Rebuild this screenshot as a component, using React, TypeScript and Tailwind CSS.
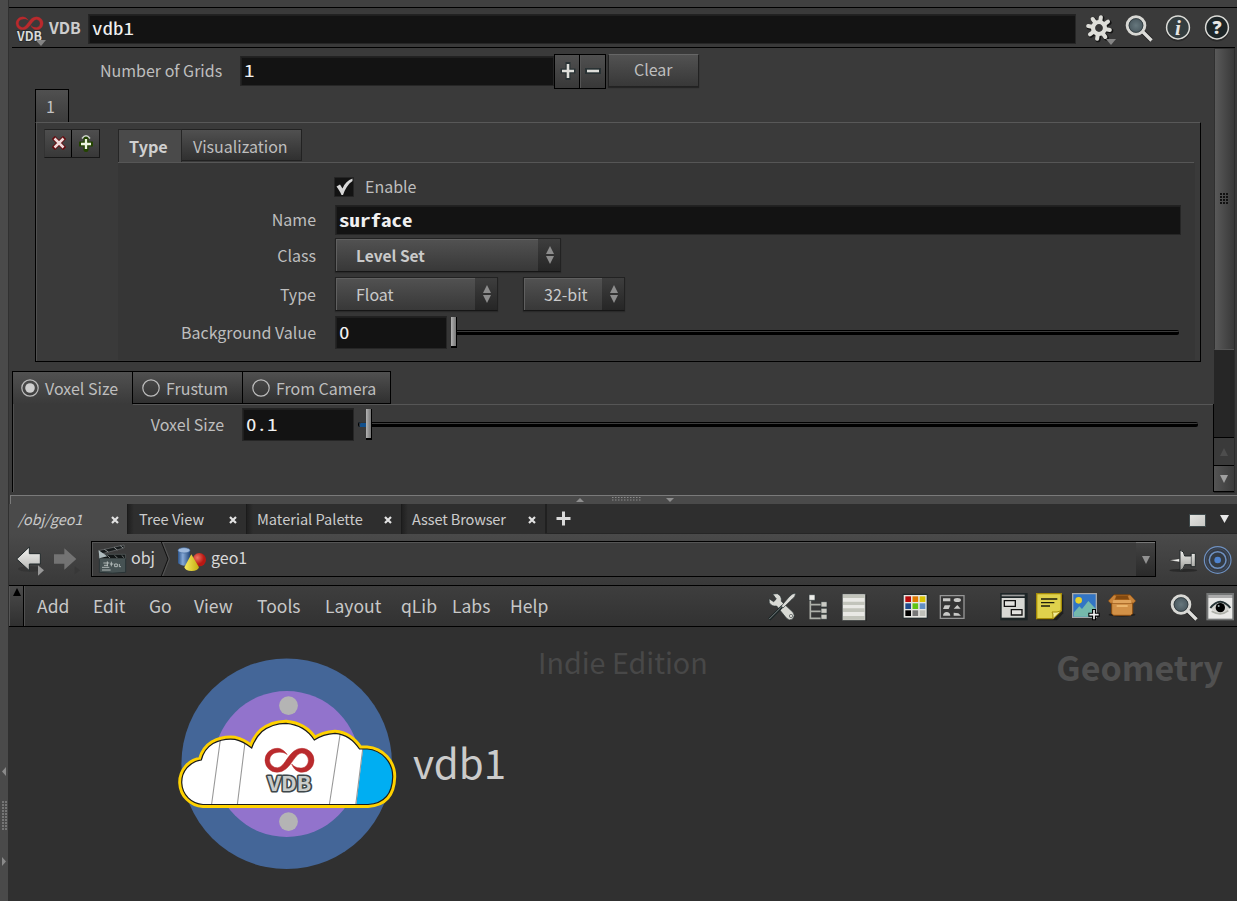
import React from "react";

const MONO = "font-['Noto_Sans_Mono_CJK_SC','DejaVu_Sans_Mono',monospace]";

function Label({ children, className = "" }: { children: React.ReactNode; className?: string }) {
  return <span className={`block shrink-0 whitespace-nowrap leading-6 ${className}`}>{children}</span>;
}

function Field({ value, className = "", textClass = "" }: { value: string; className?: string; textClass?: string }) {
  return (
    <div className={`flex shrink-0 items-center border border-[#262626] border-t-[#222] bg-[#131313] pl-[3px] shadow-[inset_1px_1px_0_#1f1f1f] ${className}`}>
      <span className={`${MONO} mb-px inline-block origin-left scale-x-[1.235] whitespace-pre text-[17px] leading-6 text-[#f0f0f0] ${textClass}`}>{value}</span>
    </div>
  );
}

function Select({ value, className = "", textClass = "" }: { value: string; className?: string; textClass?: string }) {
  return (
    <div className={`flex h-[34px] shrink-0 border border-[#222] border-b-[#161616] bg-linear-to-b from-[#525252] to-[#383838] shadow-[0_1px_1px_#2a2a2a] ${className}`}>
      <div className="flex flex-1 items-center border-l border-t border-[#606060] pb-[2px] pl-[19px]">
        <Label className={`text-[#cacaca] ${textClass}`}>{value}</Label>
      </div>
      <div className="flex w-[22px] items-center justify-center bg-linear-to-b from-[#3e3e3e] to-[#262626] pl-[2px]">
        <svg width="10" height="18" viewBox="0 0 10 18" className="mb-px">
          <path d="M5 0 9 8H1zM5 18 9 10H1z" fill="#8d8d8d" />
        </svg>
      </div>
    </div>
  );
}

function Handle() {
  return <div className="h-[31px] w-[6px] shrink-0 border-b-2 border-r border-black bg-linear-to-r from-[#b4b4b4] via-[#949494] to-[#777]" />;
}

function Track({ className = "" }: { className?: string }) {
  return <div className={`h-[5px] shrink-0 rounded-r-xs border-t border-black bg-[linear-gradient(#3c3c3c_0_1px,#000_1px)] ${className}`} />;
}

function Radio({ on }: { on?: boolean }) {
  return (
    <svg width="18" height="18" viewBox="0 0 18 18" className="shrink-0">
      <circle cx="9" cy="9" r="8.2" fill="none" stroke="#bdbdbd" strokeWidth="1.2" />
      {on && <circle cx="9" cy="9" r="4.8" fill="#cfcfcf" />}
    </svg>
  );
}

function Loop() {
  return (
    <path
      fill="#b92a2d"
      stroke="#b92a2d"
      strokeWidth=".5"
      strokeLinejoin="round"
      d="M22.500 6.500C19 2 16 .3 12.300 .3A12 12 0 0 0 12.300 24.300C26 24.300 29 5 37.300 5A7.600 7.600 0 0 1 37.300 20C33 20 30 19.500 27 16C29 21.500 33 24.300 37.300 24.300A12 12 0 0 0 37.300 .3C24 .3 21 19.300 12.800 19.800A7.600 7.600 0 0 1 12.300 4.500C16 3.800 19 4 22.500 6.500z"
    />
  );
}

function Magnifier() {
  return (
    <svg width="28" height="28" viewBox="0 0 28 28" className="shrink-0">
      <defs>
        <radialGradient id="lens"><stop stopColor="#66777d" /><stop offset="1" stopColor="#45535a" /></radialGradient>
      </defs>
      <path d="M17 17 26 26" stroke="#1d1d1d" strokeWidth="5" />
      <path d="M17 17 26.500 26.500" stroke="#dededb" strokeWidth="3.300" />
      <circle cx="11" cy="11.500" r="8.800" fill="url(#lens)" stroke="#d8d8d4" strokeWidth="3" />
      <circle cx="11" cy="11.500" r="6.900" fill="none" stroke="#2b3436" strokeWidth=".7" />
    </svg>
  );
}

function Gear() {
  return (
    <svg width="31" height="32" viewBox="0 0 31 32" className="shrink-0">
      <g transform="translate(14 15)">
        {[0, 45, 90, 135, 180, 225, 270, 315].map((a) => (
          <path key={a} d="M0-6V-11" transform={`translate(1 1) rotate(${a + 10})`} stroke="#151515" strokeWidth="5" strokeLinecap="round" />
        ))}
        {[0, 45, 90, 135, 180, 225, 270, 315].map((a) => (
          <path key={a} d="M0-6V-11" transform={`rotate(${a + 10})`} stroke="#deded9" strokeWidth="4" strokeLinecap="round" />
        ))}
        <circle r="6" fill="#363636" stroke="#deded9" strokeWidth="4.200" />
      </g>
      <path d="M21 26H31L26 32z" fill="#858585" />
    </svg>
  );
}

function RoundIcon({ glyph, serif }: { glyph: string; serif?: boolean }) {
  return (
    <svg width="26" height="28" viewBox="0 0 26 28" className="shrink-0">
      <circle cx="13" cy="15.500" r="12" fill="#202020" opacity=".6" />
      <circle cx="13" cy="13.500" r="11.400" fill={serif ? "#343d3f" : "#1d2527"} stroke="#dcdcd8" strokeWidth="1.500" />
      <text
        x="13"
        y={serif ? 20.5 : 20}
        textAnchor="middle"
        fill="#e6e6e4"
        className={serif ? "font-['Liberation_Serif',serif] text-[21px] font-bold italic" : "font-['Open_Sans',sans-serif] text-[18px] font-extrabold"}
      >
        {glyph}
      </text>
    </svg>
  );
}

function ParamHeader() {
  return (
    <div className="ml-[3px] mr-[2px] flex h-10 shrink-0 border-b border-black">
      <svg width="32" height="32" viewBox="0 0 32 32" className="ml-[3px] mt-2 shrink-0">
        <g transform="translate(.8 .7) scale(.555 .54)"><Loop /></g>
        <text x="2" y="25" textLength="25" lengthAdjust="spacingAndGlyphs" fill="#d8dad8" stroke="#252829" strokeWidth="1.500" paintOrder="stroke" className="text-[12.500px] font-bold">VDB</text>
        <path d="M20.500 24H31L26 30z" fill="#848484" />
      </svg>
      <Label className="ml-[2px] mt-[8px] w-[39px] text-[15.800px] font-bold text-[#cdcdcd]">VDB</Label>
      <Field value="vdb1" className="mt-[6px] h-[30px] w-[988px] pb-[2px]" />
      <div className="ml-[9px] mt-[5px]"><Gear /></div>
      <div className="ml-[9px] mt-[6px]"><Magnifier /></div>
      <div className="ml-[12px] mt-[6px]"><RoundIcon glyph="i" serif /></div>
      <div className="ml-[13px] mt-[6px]"><RoundIcon glyph="?" /></div>
    </div>
  );
}

function MultiparmPanel() {
  return (
    <div className="ml-[26px] w-[1166px]">
      <div className="flex h-[33px] w-[34px] items-center justify-center border border-b-0 border-black bg-linear-to-b from-[#505050] to-[#3c3c3c] pr-[3px] text-[#c4c4c4]">
        <Label>1</Label>
      </div>
      <div className="flex h-[240px] border border-black border-t-[#585858] shadow-[inset_1px_0_0_#505050]">
        <div className="ml-[8px] mt-[6px] flex h-[29px] w-[56px] shrink-0 border border-[#181818] border-l-[#333] border-t-[#222] bg-linear-to-b from-[#4e4e4e] to-[#383838]">
          <div className="flex w-[27px] items-center justify-center border-r border-black pb-px pl-[2px]">
            <svg width="14" height="14" viewBox="0 0 14 14">
              <path d="M3 3 11 11M11 3 3 11" stroke="#650c10" strokeWidth="4.500" strokeLinecap="square" />
              <path d="M2.500 2.500 11.500 11.500M11.500 2.500 2.500 11.500" stroke="#f0dada" strokeWidth="2.500" />
            </svg>
          </div>
          <div className="flex flex-1 items-center justify-center pb-[2px]">
            <svg width="14" height="18" viewBox="0 0 14 18">
              <path d="M7 4.500V15.500M1.500 10H12.500" stroke="#234400" strokeWidth="5" strokeLinecap="round" />
              <path d="M7 5V15M2 10H12" stroke="#eef4e2" strokeWidth="2.300" />
              <path d="M3 4.500Q7-1 11 4.500" stroke="#c9d0c7" strokeWidth="1.500" fill="none" />
            </svg>
          </div>
        </div>
        <div className="ml-[18px] mt-[6px] w-[1077px]">
          <div className="flex h-[33px]">
            <div className="w-[64px] border border-b-0 border-[#262626] bg-[#4a4a4a] pl-[10px] pt-[4px]">
              <Label className="text-[16.200px] font-bold text-[#d0d0d0]">Type</Label>
            </div>
            <div className="mb-px w-[120px] border border-l-0 border-[#222] bg-linear-to-b from-[#505050] to-[#303030] pl-[11px] pt-[4px]">
              <Label>Visualization</Label>
            </div>
          </div>
          <div className="mr-px h-px bg-[#565656]" />
          <div className="h-[197px] bg-[#363636]">
            <div className="flex h-[42px] items-start pl-[216px] pt-[14px]">
              <svg width="20" height="20" viewBox="0 0 20 20" className="shrink-0">
                <path d="M.5.5H19.500V19.500H.5z" fill="#131313" stroke="#242424" />
                <path d="M2.500 9.500 6 7.500 8.500 11.500C10.500 6.500 14 3 18.500 1.500V4C14 7 11 12 9 18H7.500C6 14.500 4.500 12 2.500 9.500z" fill="#d8d8d8" />
              </svg>
              <Label className="-mt-[3px] ml-[11px]">Enable</Label>
            </div>
            <div className="flex h-[33px]">
              <Label className="mt-[2px] w-[198px] text-right">Name</Label>
              <Field value="surface" className="ml-[19px] h-[30px] w-[846px]" textClass="font-bold" />
            </div>
            <div className="flex h-[39px]">
              <Label className="mt-[5px] w-[198px] text-right">Class</Label>
              <Select value="Level Set" className="ml-[19px] w-[226px]" textClass="text-[15.500px] font-bold" />
            </div>
            <div className="flex h-[39px]">
              <Label className="mt-[5px] w-[198px] text-right">Type</Label>
              <Select value="Float" className="ml-[19px] w-[163px]" />
              <Select value="32-bit" className="ml-[25px] w-[102px]" />
            </div>
            <div className="flex h-[33px]">
              <Label className="mt-[4px] w-[198px] text-right">Background Value</Label>
              <Field value="0" className="ml-[19px] h-[33px] w-[112px]" />
              <div className="ml-[4px] mt-px"><Handle /></div>
              <Track className="mt-[14px] w-[722px]" />
            </div>
          </div>
        </div>
      </div>
    </div>
  );
}

function SwitcherPanel() {
  return (
    <div className="ml-[3px] mt-[9px] w-[1202px]">
      <div className="flex h-[33px]">
        <div className="flex w-[120px] items-center gap-[6px] border-l border-t border-black bg-linear-to-b from-[#515151] to-[#3a3a3a] pl-[8px]">
          <Radio on /><Label>Voxel Size</Label>
        </div>
        <div className="flex w-[111px] items-center gap-[6px] border border-black bg-linear-to-b from-[#505050] to-[#303030] pl-[9px]">
          <Radio /><Label>Frustum</Label>
        </div>
        <div className="flex w-[148px] items-center gap-[6px] border border-l-0 border-black bg-linear-to-b from-[#505050] to-[#303030] pl-[9px]">
          <Radio /><Label>From Camera</Label>
        </div>
      </div>
      <div className="flex h-[88px] flex-col border-l border-r border-black shadow-[inset_1px_0_0_#505050]">
        <div className="ml-[120px] h-px shrink-0 bg-[#565656]" />
        <div className="mt-[3px] flex">
          <Label className="mt-[4px] w-[211px] text-right">Voxel Size</Label>
          <Field value="0.1" className="ml-[18px] h-[33px] w-[112px]" />
          <div className="ml-[4px] mt-[14px] h-[5px] w-[8px] rounded-l-xs border-l border-black bg-[#12508c] shadow-[inset_1px_1px_0_#333]" />
          <div className="mt-px"><Handle /></div>
          <Track className="mt-[14px] w-[826px]" />
        </div>
      </div>
    </div>
  );
}

function ParamScrollbar() {
  return (
    <div className="flex w-[21px] shrink-0 flex-col border-r border-[#2c2c2c] bg-[#262626]">
      <div className="flex h-[302px] items-center justify-center border-b border-l border-t border-[#303030] border-b-[#555] bg-linear-to-r from-[#5a5a5a] to-[#393939]">
        <svg width="9" height="12" viewBox="0 0 9 12">
          {[0, 3, 6].map((x) => [0, 3, 6, 9].map((y) => <path key={`${x}-${y}`} d={`M${x} ${y}h2v2h-2z`} fill="#111" />))}
        </svg>
      </div>
      <div className="flex-1" />
      <div className="flex h-[28px] items-center justify-center border-t border-black bg-[#3a3a3a]">
        <svg width="8" height="8"><path d="M4 0 8 8H0z" fill="#4d4d4d" /></svg>
      </div>
      <div className="mb-px flex h-[27px] items-center justify-center border-b border-t border-black bg-linear-to-r from-[#545454] to-[#3c3c3c]">
        <svg width="8" height="8"><path d="M0 0H8L4 8z" fill="#a0a0a0" /></svg>
      </div>
    </div>
  );
}

function CloseX() {
  return (
    <svg width="8" height="8" viewBox="0 0 8 8" className="mt-px shrink-0">
      <path d="M1 1 7 7M7 1 1 7" stroke="#e2e2e2" strokeWidth="2.200" />
    </svg>
  );
}

function PaneTab({ title, className }: { title: string; className: string }) {
  return (
    <div className={`flex h-[30px] shrink-0 items-center justify-between border-l border-[#1b1b1b] bg-linear-to-r from-[#202020] via-[#2e2e2e] via-[6px] to-[#2e2e2e] pr-[9px] ${className}`}>
      <Label className="text-[14.600px] text-[#cbcbcb]">{title}</Label>
      <CloseX />
    </div>
  );
}

function PaneTabs() {
  return (
    <div className="flex h-[30px] shrink-0 border-b border-[#262626] bg-[#2e2e2e]">
      <div className="-mb-px flex h-[30px] w-[118px] items-center justify-between bg-[#4a4a4a] pl-[9px] pr-[8px]">
        <Label className="text-[14.300px] italic text-[#cbcbcb]">/obj/geo1</Label>
        <CloseX />
      </div>
      <PaneTab title="Tree View" className="w-[119px] pl-[11px]" />
      <PaneTab title="Material Palette" className="w-[155px] pl-[10px]" />
      <PaneTab title="Asset Browser" className="w-[144px] pl-[10px] tracking-[-0.15px]" />
      <div className="flex flex-1 items-center border-l-2 border-[#202020] pl-[9px]">
        <svg width="15" height="15" viewBox="0 0 15 15"><path d="M7.500.5V14.500M.5 7.500H14.500" stroke="#dadada" strokeWidth="3" /></svg>
        <div className="flex-1" />
        <div className="mr-[14px] mt-[3px] h-[13px] w-[17px] border border-[#3f4a4c] bg-linear-to-br from-[#e2e2df] to-[#c8c8c5]" />
        <svg width="9" height="8" className="mr-[8px] mt-px"><path d="M0 0H9L4.500 8z" fill="#e8e8e8" /></svg>
      </div>
    </div>
  );
}

function PathBar() {
  return (
    <div className="flex h-[51px] shrink-0 bg-linear-to-b from-[#4a4a4a] to-[#393939]">
      <svg width="76" height="40" viewBox="27 139 228 120" className="mt-[2px] shrink-0">
        <defs>
          <linearGradient id="arrow" x2="0" y2="1"><stop stopColor="#f4f4f2" /><stop offset="1" stopColor="#b5b5b2" /></linearGradient>
        </defs>
        <ellipse cx="90" cy="238" rx="36" ry="8" fill="#2c2c2c" opacity=".5" />
        <path d="M50 208 88 172V192H121V223H88V243z" fill="url(#arrow)" stroke="#20282a" strokeWidth="3" />
        <path d="M229 208 193 176V194H162V222H193V240z" fill="#737373" />
        <path d="M114 227V258L132 242z" fill="#989898" />
        <path d="M224 230V254L240 242z" fill="#383838" />
      </svg>
      <div className="ml-[6px] mt-[7px] flex h-[36px] w-[1065px] shrink-0 border border-black bg-[#3b3b3b] shadow-[inset_1px_1px_0_#555]">
        <svg width="32" height="34" viewBox="276 156 96 102" className="shrink-0 overflow-visible">
          <path d="M298 204H377V247Q337 252 298 247z" fill="#465253" stroke="#293335" strokeWidth="3" />
          <path d="M296 182 372 165V174L299 193z" fill="#15191a" stroke="#84898a" strokeWidth="1.500" />
          <path d="M313 178 325 186M342 172 352 180M361 167 369 174" stroke="#8a8f8f" strokeWidth="3" />
          <path d="M298 193H376V206H298z" fill="#111616" stroke="#687273" strokeWidth="1.500" />
          <path d="M322 196 330 204M344 196 352 204M365 196 372 203" stroke="#8a8f8f" strokeWidth="2.500" />
          <path d="M296 181 322 199 298 205z" fill="#aebbbd" />
          <path d="M306 232H328M306 240H332M310 219H328M312 226H324M322 214V229M334 215V229M330 222H340M344 222V230H352V222H344M358 222V230H363" fill="none" stroke="#c4cbca" strokeWidth="2.500" />
        </svg>
        <Label className="ml-[7px] mt-[3px] w-[24px] text-[16px] text-[#d8d8d8]">obj</Label>
        <svg width="55" height="34" viewBox="462 156 165 102" className="-ml-px shrink-0">
          <defs>
            <linearGradient id="cyl"><stop stopColor="#2b548b" /><stop offset=".4" stopColor="#86a9d6" /><stop offset="1" stopColor="#234779" /></linearGradient>
            <radialGradient id="ball" cx=".35" cy=".35"><stop stopColor="#f07563" /><stop offset="1" stopColor="#b91813" /></radialGradient>
            <linearGradient id="cone"><stop stopColor="#f8ec62" /><stop offset="1" stopColor="#c3ad10" /></linearGradient>
          </defs>
          <path d="M484 156 504 207 484 258" fill="none" stroke="#111" strokeWidth="3" />
          <path d="M488 156 508 207 488 258" fill="none" stroke="#555" strokeWidth="3" />
          <path d="M534 181V220Q552 234 570 220V181z" fill="url(#cyl)" />
          <ellipse cx="552" cy="181" rx="18" ry="8" fill="#9eb9dc" stroke="#3f679c" strokeWidth="2" />
          <circle cx="598" cy="209" r="20" fill="url(#ball)" />
          <path d="M574 193 553 232Q556 243 575 243T597 232z" fill="url(#cone)" />
        </svg>
        <Label className="ml-[2px] mt-[3px] w-[40px] text-[16px] text-[#d8d8d8]">geo1</Label>
        <div className="flex-1" />
        <div className="flex w-[19px] items-center justify-center border-t border-[#777] bg-linear-to-b from-[#424242] to-[#2a2a2a]">
          <svg width="8" height="8"><path d="M0 0H8L4 8z" fill="#929292" /></svg>
        </div>
      </div>
      <svg width="81" height="40" viewBox="528 117 243 120" className="mt-[5px] shrink-0">
        <defs>
          <linearGradient id="pin" x2="0" y2="1"><stop stopColor="#f1f1ee" /><stop offset="1" stopColor="#9c9c98" /></linearGradient>
        </defs>
        <ellipse cx="610" cy="211" rx="42" ry="5" fill="#292929" />
        <path d="M568 181 599 176V186z" fill="#efefec" stroke="#222" />
        <path d="M600 150Q613 153 614 168H633V160H646V200H633V194H614Q613 207 600 212z" fill="url(#pin)" stroke="#24292a" strokeWidth="3" />
        <path d="M634 162V198" stroke="#3a4041" strokeWidth="2" />
        <g fill="none" stroke="#6f91c1">
          <circle cx="713" cy="180" r="40" fill="#353b45" strokeWidth="3.500" />
          <circle cx="713" cy="180" r="34" strokeWidth="2" stroke="#47566b" />
          <circle cx="713" cy="180" r="25" strokeWidth="4.500" fill="#343b44" />
        </g>
        <circle cx="713" cy="180" r="10" fill="#4e83d0" />
      </svg>
    </div>
  );
}

const menus = [
  { name: "Add", w: "w-[56px]" },
  { name: "Edit", w: "w-[56px]" },
  { name: "Go", w: "w-[45px]" },
  { name: "View", w: "w-[63px]" },
  { name: "Tools", w: "w-[68px]" },
  { name: "Layout", w: "w-[76px]" },
  { name: "qLib", w: "w-[51px]" },
  { name: "Labs", w: "w-[58px]" },
  { name: "Help", w: "w-[258px]" },
];

function ToolIcon({ box, className = "", children }: { box: string; className?: string; children: React.ReactNode }) {
  return <svg width="30" height="30" viewBox={box} className={`shrink-0 ${className}`}>{children}</svg>;
}

const swatches = ["#b80c0c", "#e07800", "#d9c400", "#1e4b8c", "#5fc414", "#628fc4", "#000", "#777", "#bfc0ba"];

function MenuBar() {
  return (
    <div className="flex h-[42px] shrink-0 border-b border-t border-black bg-linear-to-b from-[#3e3e3e] to-[#323232]">
      <div className="flex w-[15px] shrink-0 justify-center border-l border-r border-[#555] border-r-black bg-linear-to-b from-[#4b4b4b] to-[#303030] pt-[2px]">
        <svg width="8" height="8"><path d="M4 0 8 8H0z" fill="#000" /></svg>
      </div>
      <div className="flex border-l border-[#505050] pl-[12px] pt-[8px]">
        {menus.map((m) => (
          <Label key={m.name} className={`${m.w} text-[17.500px] text-[#c8c8c8]`}>{m.name}</Label>
        ))}
      </div>
      <div className="mt-[6px] flex h-[30px]">
        <ToolIcon box="84 276 90 90">
          <path d="M98 282 112 281Q126 287 124 304L159 337Q167 347 158 357Q148 364 139 354L110 318Q95 320 88 308L87 296 101 305 109 297z" fill="#d9dad5" stroke="#293335" strokeWidth="2" />
          <circle cx="153" cy="348" r="5" fill="none" stroke="#4a5051" strokeWidth="2" />
          <path d="M88 358 128 318" stroke="#1b2526" strokeWidth="9" />
          <path d="M88 357 128 317" stroke="#7b8384" strokeWidth="3" />
          <path d="M124 318 147 291Q156 280 167 279Q167 290 156 298L129 324z" fill="#dcdcd8" stroke="#293335" strokeWidth="2" />
        </ToolIcon>
        <ToolIcon box="192 276 90 90" className="ml-[6px]">
          <g stroke="#2c3536" strokeWidth="2">
            <path d="M211 301V355H243M211 314H243M211 334H243" stroke="#aeb0a9" strokeWidth="5" fill="none" />
            <path d="M207 284H225V301H207z" fill="#eeeeea" />
            <path d="M243 305H261V321H243zM243 325H261V340H243zM243 343H261V358H243z" fill="#cacbc5" />
          </g>
        </ToolIcon>
        <ToolIcon box="300 276 90 90" className="ml-[6px]">
          <path d="M308 284H379V363H308z" fill="#111" />
          <path d="M307 282H376V361H307z" fill="#e9e9e5" stroke="#444a4a" strokeWidth="2" />
          <path d="M309 284H374V294H309zM309 305H374V315H309zM309 325H374V336H309zM309 348H374V359H309z" fill="#c2c4bb" />
        </ToolIcon>
        <ToolIcon box="483 276 90 90" className="ml-[31px]">
          <path d="M488 281H563V356H488z" fill="#202b2d" />
          <path d="M491 285H560V353H491z" fill="#e6e6e2" />
          {swatches.map((c, i) => (
            <rect key={c} x={496 + (i % 3) * 21.5} y={289 + Math.floor(i / 3) * 21} width="17" height="17" fill={c} />
          ))}
        </ToolIcon>
        <ToolIcon box="594 276 90 90" className="ml-[7px]">
          <path d="M601 287H672V355H601z" fill="#343434" stroke="#969696" strokeWidth="4" />
          <g fill="#c9c9c7">
            <path d="M609 295H631V304H609zM614 316H631L626 327H609zM641 326 652 315 662 326zM609 347Q610 336 620 336T631 347zM641 338 655 340 663 347H641z" />
            <ellipse cx="652" cy="300" rx="11" ry="6" />
          </g>
        </ToolIcon>
        <ToolIcon box="60 276 90 90" className="ml-[32px]">
          <path d="M61 279H143V361H61z" fill="#1c2426" />
          <path d="M65 284H134V289H65z" fill="#999" />
          <path d="M65 294H134V353H65z" fill="#d7d8d4" />
          <path d="M73 302H106V319H73zM94 329H126V345H94z" fill="#e2e2df" stroke="#111" strokeWidth="4" />
        </ToolIcon>
        <ToolIcon box="168 276 90 90" className="ml-[6px]">
          <path d="M172 284H250V340L231 361H172z" fill="#111" opacity=".6" />
          <path d="M170 281H244V332L219 356H170z" fill="#e0d24c" stroke="#a58b08" strokeWidth="4" />
          <path d="M244 332 219 356Q220 338 216 336 232 338 244 332z" fill="#f5ee9a" stroke="#a58b08" strokeWidth="3" />
          <path d="M183 297H232M183 308H223M183 318H210" stroke="#1d1d0c" strokeWidth="4" />
        </ToolIcon>
        <ToolIcon box="276 276 90 90" className="ml-[6px]">
          <path d="M278 281H349V352H278z" fill="#3275c5" stroke="#a6a8a9" strokeWidth="4" />
          <circle cx="296" cy="301" r="10" fill="#e8d22b" />
          <path d="M282 337 298 319 306 327 325 303 347 326V350H282z" fill="#75b9ac" />
          <path d="M342 327V361M325 344H359" stroke="#000" strokeWidth="12" />
          <path d="M342 330V358M328 344H356" stroke="#f2f2f2" strokeWidth="5" />
        </ToolIcon>
        <ToolIcon box="384 276 90 90" className="ml-[6px]">
          <ellipse cx="426" cy="344" rx="40" ry="6" fill="#1f1f1f" />
          <path d="M403 284H449L466 303 458 311H394L386 303z" fill="#a9651d" stroke="#7b430c" strokeWidth="2" />
          <path d="M408 287H444L448 298H404z" fill="#83490f" />
          <path d="M385 303 402 285 409 288 401 308 394 311zM467 303 450 285 443 288 451 308 458 311z" fill="#c9843a" stroke="#884b10" />
          <path d="M395 309H458V341L452 346H401L395 341z" fill="#d29147" stroke="#884b10" strokeWidth="3" />
          <path d="M400 300H452L455 309H397z" fill="#e0a45c" />
          <path d="M410 318H443" stroke="#f8c87e" strokeWidth="4" />
        </ToolIcon>
        <div className="ml-[32px] mt-px w-[30px]"><Magnifier /></div>
        <ToolIcon box="674 276 90 90" className="ml-[5px]">
          <path d="M678 279H761V361H678z" fill="#747676" />
          <path d="M684 294H756V356H684z" fill="#e9e9e7" />
          <path d="M684 285H756V294H684z" fill="#aaa" />
          <path d="M690 324Q720 296 750 324Q720 352 690 324z" fill="#d4d4d0" />
          <path d="M690 324Q720 286 750 324" fill="none" stroke="#263436" strokeWidth="6" />
          <path d="M694 334Q722 350 744 332" fill="none" stroke="#aeb0a9" strokeWidth="5" />
          <circle cx="720" cy="323" r="14" fill="#000" />
          <circle cx="715" cy="318" r="3" fill="#9aa" />
        </ToolIcon>
      </div>
    </div>
  );
}

const CLOUD =
  "M203 804.500A22.350 22.350 0 0 1 201.300 760Q204 749 213 743.500Q223 738 235 739.300Q243 741 251.700 748Q255 738 262 731.500Q272 723.500 286 723.300Q305 725 314.300 740Q323 734 335 733.300Q350 734.500 359.500 749H367A27.500 27.500 0 0 1 392.700 777Q392 803 368 804.500z";

function NetworkView() {
  return (
    <div className="relative h-[274px] overflow-hidden bg-[#303030]">
      <svg className="absolute left-0 top-0" width="500" height="274" viewBox="9 627 500 274">
        <defs>
          <clipPath id="cloud"><path d={CLOUD} /></clipPath>
        </defs>
        <circle cx="286.700" cy="763.800" r="105.300" fill="#446698" />
        <circle cx="286.700" cy="764" r="73" fill="#9273cc" />
        <circle cx="288.500" cy="705.600" r="9.400" fill="#b4b4b4" />
        <circle cx="288.500" cy="821.600" r="9.400" fill="#b4b4b4" />
        <path d={CLOUD} fill="#fff" stroke="#ffd200" strokeWidth="7" strokeLinejoin="round" />
        <path d={CLOUD} fill="#fff" />
        <g clipPath="url(#cloud)">
          <path d="M363.500 745 355.500 810H400V745z" fill="#00aef2" />
          <path d="M220.300 740 211.500 805M245.300 740 237.300 805M340.300 733 329.300 805M363.200 745 355.700 805" stroke="#999" strokeWidth="1.100" />
        </g>
        <path d={CLOUD} fill="none" stroke="#1a1a1a" strokeWidth="1.200" />
        <g transform="translate(264.700 748)"><Loop /></g>
        <text x="267.500" y="790.500" textLength="44" lengthAdjust="spacingAndGlyphs" fill="#c9cccb" stroke="#3e474a" strokeWidth="3" paintOrder="stroke" strokeLinejoin="round" className="text-[20px] font-bold">VDB</text>
      </svg>
      <span className="absolute left-[404px] top-[105px] whitespace-nowrap text-[40.300px] leading-[60px] text-[#cbcbcb]">vdb1</span>
      <span className="absolute left-[529px] top-[15px] whitespace-nowrap text-[28.700px] leading-[40px] text-[#484848]">Indie Edition</span>
      <span className="absolute right-[14px] top-[15px] whitespace-nowrap text-[34px] font-bold leading-[50px] text-[#505050]">Geometry</span>
    </div>
  );
}

function SideStrip() {
  return (
    <div className="flex w-[9px] shrink-0 flex-col border-r border-[#303030] bg-[#4a4a4a]">
      <svg width="8" height="901" viewBox="0 0 8 901">
        <path d="M6 767V776L2 771.500zM2 857V866L6 861.500z" fill="#8a8a8a" />
        {Array.from({ length: 10 }, (_, i) => (
          <path key={i} d={`M2 ${801 + i * 3}h2v2h-2zM5 ${801 + i * 3}h2v2h-2z`} fill="#757575" />
        ))}
      </svg>
    </div>
  );
}

export default function App() {
  return (
    <div className="flex h-[901px] w-[1237px] overflow-hidden bg-[#3a3a3a] font-['Noto_Sans_CJK_SC',sans-serif] text-[16px] text-[#bebebe]">
      <SideStrip />
      <div className="flex min-w-0 flex-1 flex-col">
        <div className="h-[8px] shrink-0 border-b border-black bg-[#404040]" />
        <ParamHeader />
        <div className="flex h-[445px] shrink-0">
          <div className="w-[1205px] shrink-0">
            <div className="flex h-[41px] pt-[6px]">
              <Label className="ml-[91px] mt-[4px] w-[140px]">Number of Grids</Label>
              <Field value="1" className="mt-[2px] h-[30px] w-[314px] pb-[2px]" />
              <div className="flex h-[35px] w-[52px] shrink-0 border border-black bg-linear-to-b from-[#505050] to-[#383838]">
                <div className="flex w-[25px] items-center justify-center border-r border-black pb-px pl-px">
                  <svg width="16" height="18" viewBox="0 0 16 18">
                    <path d="M8 0V18M.5 9H15.500" stroke="#293234" strokeWidth="5" />
                    <path d="M8 2V16M2 9H14" stroke="#dededa" strokeWidth="2.600" />
                  </svg>
                </div>
                <div className="flex flex-1 items-center justify-center border-l border-[#555] pb-px">
                  <svg width="16" height="6" viewBox="0 0 16 6">
                    <path d="M0 3H16" stroke="#293234" strokeWidth="6" />
                    <path d="M2 3H14" stroke="#dededa" strokeWidth="2.600" />
                  </svg>
                </div>
              </div>
              <div className="ml-[2px] h-[33px] w-[91px] shrink-0 border border-[#222] border-t-[#666] bg-linear-to-b from-[#525252] to-[#383838] pl-[25px] pt-[2px] shadow-[0_1px_1px_#252525]">
                <Label>Clear</Label>
              </div>
            </div>
            <MultiparmPanel />
            <SwitcherPanel />
          </div>
          <ParamScrollbar />
        </div>
        <div className="ml-px mt-[2px] flex h-[9px] shrink-0 justify-center border-l border-t border-[#7a7a7a] bg-[#4a4a4a] pl-[2px]">
          <svg width="100" height="8" viewBox="0 0 100 8">
            <path d="M1 6H9L5 2zM91 2H99L95 6z" fill="#8e8e8e" />
            {Array.from({ length: 10 }, (_, i) => (
              <path key={i} d={`M${37 + i * 3} 1h1.500v1h-1.500zM${37 + i * 3} 3.500h1.500v1h-1.500z`} fill="#8a8a8a" />
            ))}
          </svg>
        </div>
        <PaneTabs />
        <PathBar />
        <MenuBar />
        <NetworkView />
      </div>
    </div>
  );
}
